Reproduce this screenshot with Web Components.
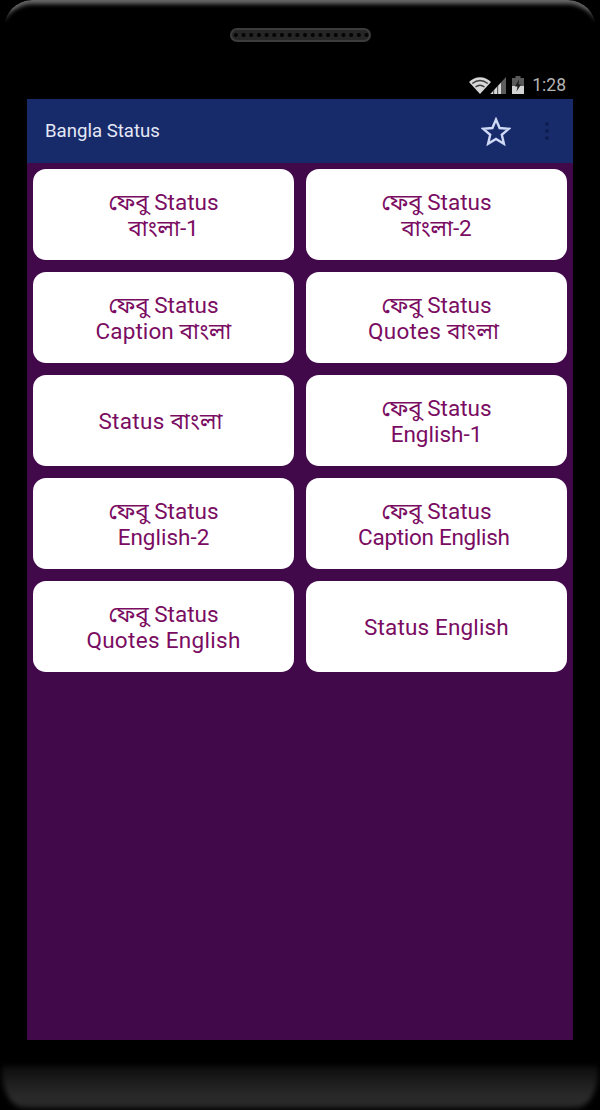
<!DOCTYPE html>
<html lang="bn"><head><meta charset="utf-8"><title>Bangla Status</title>
<style>html,body{margin:0;padding:0;background:#000;width:600px;height:1110px;overflow:hidden}</style></head>
<body>
<phone-frame>
  <app-bar title="Bangla Status"></app-bar>
  <tile-grid>
    <status-tile>ফেবু Status<br>বাংলা-1</status-tile>
    <status-tile>ফেবু Status<br>বাংলা-2</status-tile>
    <status-tile>ফেবু Status<br><span style="letter-spacing:.1px">Caption বাংলা</span></status-tile>
    <status-tile>ফেবু Status<br><span style="letter-spacing:.25px">Quotes বাংলা&nbsp;</span></status-tile>
    <status-tile><span style="letter-spacing:.3px">Status বাংলা&nbsp;</span></status-tile>
    <status-tile>ফেবু Status<br>English-1</status-tile>
    <status-tile>ফেবু Status<br>English-2</status-tile>
    <status-tile>ফেবু Status<br><span style="letter-spacing:-.3px">Caption English&nbsp;</span></status-tile>
    <status-tile>ফেবু Status<br><span style="letter-spacing:.3px">Quotes English</span></status-tile>
    <status-tile><span style="letter-spacing:.15px">Status English</span></status-tile>
  </tile-grid>
</phone-frame>
<script>
function def(name, html, init){
  customElements.define(name, class extends HTMLElement{
    constructor(){super();this.attachShadow({mode:'open'}).innerHTML=html;}
    connectedCallback(){ if(init) init(this); }
  });
}
def('phone-frame',`<style>
:host{display:flex;flex-direction:column;width:600px;height:1110px;background:#000;font-family:Roboto,"Noto Sans Bengali","Lohit Bengali","Noto Sans",sans-serif}
.top{height:99px;box-sizing:border-box;display:flex;flex-direction:column}
.edge{height:28px;margin:0 4px;border-radius:32px 32px 0 0;flex:none;box-shadow:inset 0 5px 4px -1px #686868;-webkit-mask-image:linear-gradient(#000 30%,transparent 85%);mask-image:linear-gradient(#000 30%,transparent 85%)}
.speaker{flex:none;align-self:center;width:141px;height:14px;box-sizing:border-box;border:2px solid #3c3c3c;border-radius:7px;background:radial-gradient(circle,#050505 1.6px,#262626 2.4px) 0 0/7.700px 10px repeat-x;filter:blur(.4px)}
.spacer{flex:1}
.screen{width:546px;margin:0 auto;height:941px;display:flex;flex-direction:column;background:#41084a;flex:none}
.gap{height:26px;flex:none}
.bottom{flex:none;height:42px;margin:0 2px;border-radius:2px 2px 22px 22px/2px 2px 36px 36px;background:linear-gradient(#0d0d0d,#2b2b2b 75%,#252525);filter:blur(2.500px)}
</style>
<div class="top"><div class="edge"></div><div class="speaker"></div><div class="spacer"></div><status-bar></status-bar></div>
<div class="screen"><slot></slot></div>
<div class="gap"></div>
<div class="bottom"></div>`);
def('status-bar',`<style>
:host{display:flex;align-items:center;justify-content:flex-end;height:24px;padding:0 34px 0 0;margin-bottom:2px;color:#b4b4b4;font:17.500px/24px Roboto,sans-serif}
svg{display:block}
span{margin-left:8px}
</style>
<svg width="37" height="18" viewBox="0 0 37 18"><path d="M0 6C6-.5 16-.5 22 6L11 18Z" fill="#d6d6d6"/><path d="M3.200 7.500Q11 1.500 18.800 7.500M6.500 11Q11 7.500 15.500 11" stroke="#3a3a3a" stroke-width="1.300" fill="none"/><path d="M21 18 37 1V18Z" fill="#5c5c5c"/><path d="M21.500 18 24 15.300V18ZM25.200 18V14L28 11V18ZM29.200 18V9.700L32 6.700V18Z" fill="#d8d8d8"/></svg>
<svg style="margin-left:6px" width="12" height="18" viewBox="0 0 12 18"><path d="M3.500 0h5v2H12v16H0V2h3.500Z" fill="#5a5a5a"/><path d="M0 10h12v8H0Z" fill="#d4d4d4"/><path d="M7 3.500 3 10.500h2.500L4.500 15.500 9 8.500H6.500Z" fill="#1c1c1c"/></svg>
<span>1:28</span>`);
def('app-bar',`<style>
:host{display:flex;align-items:center;height:64px;background:#172a6a;flex:none;color:#e4e8f6;font:400 18.600px Roboto,sans-serif;padding:0 18px}
.t{flex:1}
svg{display:block}
.star{margin-right:34px}
</style>
<div class="t"></div>
<svg class="star" width="30" height="29" viewBox="0 0 30 29"><path d="M15 2.500 18.600 11 27.800 11.800 20.800 17.800 22.900 26.800 15 22 7.100 26.800 9.200 17.800 2.200 11.800 11.400 11Z" fill="none" stroke="#cfd9f5" stroke-width="2.400"/></svg>
<svg width="4" height="20" viewBox="0 0 4 20" style="margin-right:6px"><circle cx="2" cy="3" r="1.800" fill="#0d1a4c"/><circle cx="2" cy="10" r="1.800" fill="#0d1a4c"/><circle cx="2" cy="17" r="1.800" fill="#0d1a4c"/></svg>`,
el=>{el.shadowRoot.querySelector('.t').textContent=el.getAttribute('title');el.removeAttribute('title');});
def('tile-grid',`<style>
:host{display:grid;grid-template-columns:261px 261px;grid-auto-rows:91px;column-gap:12px;row-gap:12px;padding:6px 6px}
</style><slot></slot>`);
def('status-tile',`<style>
:host{display:flex;align-items:center;justify-content:center;text-align:center;background:#fff;border-radius:13px;color:#7a0c62;font:22.500px/26px Roboto,"Noto Sans Bengali","Lohit Bengali",sans-serif}
</style><div><slot></slot></div>`);
</script>
</body></html>
